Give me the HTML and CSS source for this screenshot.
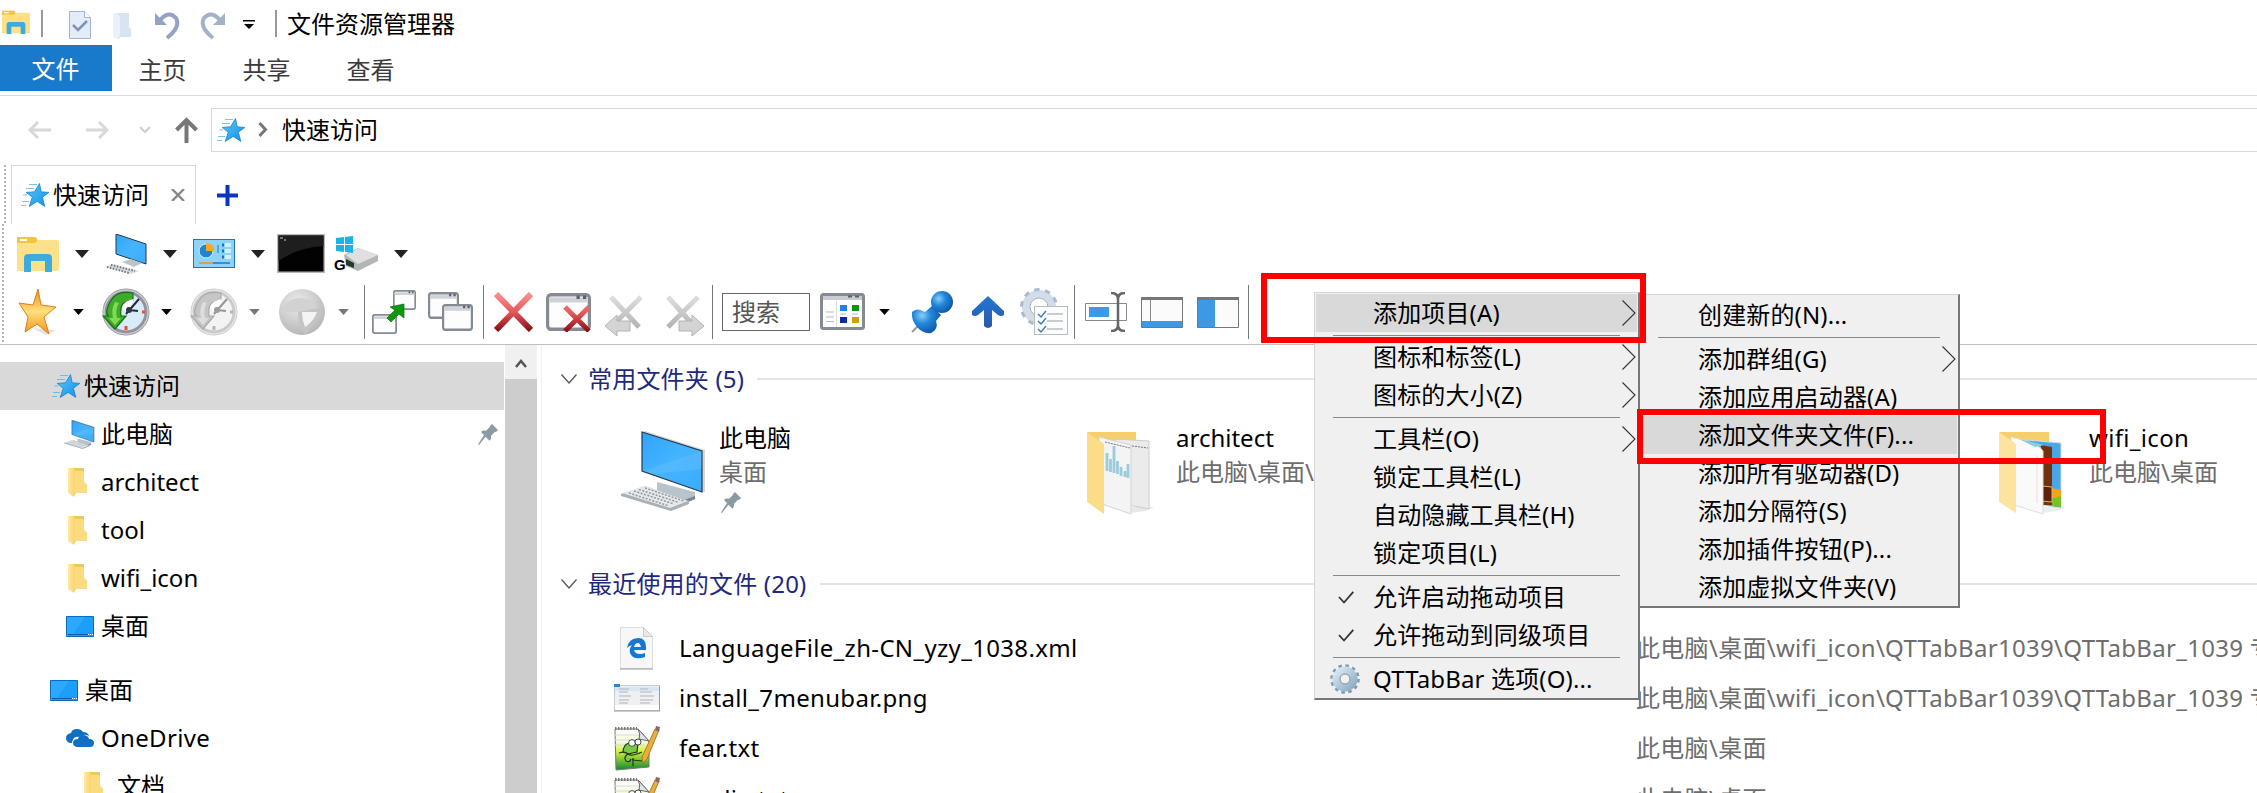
FILE: index.html
```html
<!DOCTYPE html>
<html lang="zh-CN">
<head>
<meta charset="utf-8">
<title>文件资源管理器</title>
<link rel="stylesheet" href="styles.css">
</head>
<body>
<svg class="defs" width="0" height="0" aria-hidden="true">
  <defs>
    <linearGradient id="gBlue" x1="0" y1="0" x2="1" y2="1"><stop offset="0" stop-color="#2fa4fb"/><stop offset=".5" stop-color="#45b4ff"/><stop offset="1" stop-color="#3aaaff"/></linearGradient>
    <linearGradient id="gStar" x1="0" y1="0" x2="1" y2="1"><stop offset="0" stop-color="#5cc8fa"/><stop offset="1" stop-color="#0f90e6"/></linearGradient>
    <linearGradient id="gGold" x1="0" y1="0" x2="0" y2="1"><stop offset="0" stop-color="#e98b1c"/><stop offset=".5" stop-color="#ffe07a"/><stop offset="1" stop-color="#f0931d"/></linearGradient>
    <linearGradient id="gRed" gradientUnits="userSpaceOnUse" x1="0" y1="2" x2="0" y2="38"><stop offset="0" stop-color="#f98f8c"/><stop offset=".5" stop-color="#e45a5a"/><stop offset="1" stop-color="#8d1018"/></linearGradient>
    <linearGradient id="gFold" x1="0" y1="0" x2="1" y2="0"><stop offset="0" stop-color="#ffe9a4"/><stop offset="1" stop-color="#f7d068"/></linearGradient>
    <linearGradient id="gArrow" x1="0" y1="0" x2="0" y2="1"><stop offset="0" stop-color="#1d7ad6"/><stop offset="1" stop-color="#2d57a8"/></linearGradient>
    <linearGradient id="gGray" x1="0" y1="0" x2="0" y2="1"><stop offset="0" stop-color="#dedede"/><stop offset="1" stop-color="#b4b4b4"/></linearGradient>
    <linearGradient id="gGrass" x1="0" y1="0" x2="0" y2="1"><stop offset="0" stop-color="#fff"/><stop offset=".3" stop-color="#f5fbd8"/><stop offset=".55" stop-color="#d8ee3a"/><stop offset="1" stop-color="#0c8a2c"/></linearGradient>
    <radialGradient id="gPin" cx=".35" cy=".35" r=".75"><stop offset="0" stop-color="#8ccdf8"/><stop offset=".4" stop-color="#2389dc"/><stop offset="1" stop-color="#0d4f9e"/></radialGradient>
    <radialGradient id="gBall" cx=".4" cy=".3" r=".75"><stop offset="0" stop-color="#ececec"/><stop offset="1" stop-color="#b4b4b4"/></radialGradient>
    <linearGradient id="gGear" x1="0" y1="0" x2="1" y2="1"><stop offset="0" stop-color="#d9e8f4"/><stop offset="1" stop-color="#8fabc2"/></linearGradient>
  </defs>
  <symbol id="star" viewBox="0 0 28 24">
    <path d="M18.500 .5l1.700 8.300 7.600.6-6.400 4.800 2.400 9.200-7.600-5-8 5.100 3.100-9.300-6.100-4.800 8.300-.6z" fill="url(#gStar)" stroke="#1583cf" stroke-width=".8"/>
    <path d="M8 1.500h8M5 5.500h8M2 12h4M1 18.500h7M0 22.500h5" stroke="#5ab4e6" stroke-width=".8"/>
  </symbol>
  <symbol id="pc" viewBox="0 0 84 80">
    <path d="M36 51l38 10v7l-11 4-27-9z" fill="#b9c3cb"/><path d="M36 61l27 8 11-4v3l-11 5-27-9z" fill="#7a858e"/>
    <path d="M21 1l3-1 60 19v42l-3 0z" fill="#d2d6d9"/>
    <path d="M21 1l60 19v41L21 40z" fill="url(#gBlue)" stroke="#263a4c" stroke-width="1.200"/>
    <path d="M81 20v18L32 43 21 40z" fill="#fff" opacity=".08"/>
    <path d="M0 63l24-8 44 15v3L50 80 0 65z" fill="#a9b0b5"/><path d="M1 62l23-7 43 15-18 7z" fill="#e6e9eb"/>
    <path d="M8 62l40 13M13 60l40 13M18 58.500l40 13M24 57l39 13" stroke="#8f979d" stroke-width="1.500" stroke-dasharray="2 1.500"/>
  </symbol>
  <symbol id="explorer" viewBox="0 0 42 36">
    <path d="M0 3q0-2 2-2h15q3 0 4 3h19q2 0 2 2v27q0 2-2 2H0z" fill="#fde08a"/><path d="M0 1h17q3 0 3 3t-3 3H0z" fill="#f3c53b"/><rect x="3" y="3" width="7" height="2" fill="#fff"/>
    <path d="M7 36V22q0-4 4-4h20q4 0 4 4v14h-7V25H14v11z" fill="#3cabdf"/>
  </symbol>
  <symbol id="folder" viewBox="0 0 19 29">
    <path d="M5 0h11v14l3 3v8H5z" fill="#f0c95e"/><path d="M1 0h4l3 4v21l-2 4-6-4V1z" fill="url(#gFold)"/><path d="M7 3h9v11l3 4v7H7z" fill="#fadb7e"/>
  </symbol>
  <symbol id="screen" viewBox="0 0 28 21"><path d="M.5.5h27v20H.5z" fill="#1c9ffb" stroke="#0b6cb8"/><path d="M1 1h18L7 18H1z" fill="#2ba8ff"/><path d="M2 18.500h20" stroke="#0b5ea5"/><path d="M22 18.500h5" stroke="#fff" stroke-dasharray="1 1"/></symbol>
  <symbol id="pin" viewBox="0 0 20 21"><path d="M14 0l6 6-2 2-1-.3-4 4q.6 3-1.500 5l-4-4L1 21l-1-.6L6 11 3 8q2-2 5-1.300l4-4L12 2z" fill="#8b9aa3"/></symbol>
  <symbol id="tri" viewBox="0 0 14 8"><path d="M0 0h14L7 8z" fill="currentColor"/></symbol>
  <symbol id="win" viewBox="0 0 28 22" preserveAspectRatio="none"><rect x="1" y="1" width="26" height="20" rx="2" fill="#fdfdfd" stroke="#858b94" stroke-width="2"/><path d="M2 4h24" stroke="#cfd3d8" stroke-width="3"/><path d="M19 2.500h2m2 0h2" stroke="#59616b" stroke-width="2"/></symbol>
  <symbol id="chev" viewBox="0 0 14 26"><path d="M.5.5L13 13 .5 25.500" fill="none" stroke="#333" stroke-width="1.100"/></symbol>
  <symbol id="check" viewBox="0 0 16 13"><path d="M1 6l5 5.500L15.300.8" fill="none" stroke="#333" stroke-width="1.800"/></symbol>
  <symbol id="down" viewBox="0 0 16 10"><path d="M.5.5L8 9 15.500.5" fill="none" stroke="#555" stroke-width="1.300"/></symbol>
  <symbol id="clock" viewBox="0 0 48 48">
    <circle cx="24" cy="24" r="21" fill="#d8ebf8" stroke="#93939f" stroke-width="5"/><circle cx="24" cy="24" r="22" fill="none" stroke="#c9cad0" stroke-width="1.500"/>
    <path d="M31 5Q14 2 8 14T7 28H1l12 13L24 28h-5q-1-9 2-12t10-4z" fill="#3faa2c" stroke="#18700e" stroke-width="1.200"/><path d="M13 14q-4 7-2 16H7l6 7 6-7h-4q-2-9 2-15z" fill="#82da50"/>
    <path d="M20 19q3-7 12-8l-4 9-4 4z" fill="#fff"/>
    <path d="M24 26L37 11M27 22l9 1" stroke="#222c38" stroke-width="2"/><circle cx="27" cy="22" r="3" fill="#2e3947"/><path d="M24 38v4M40 24h3" stroke="#e6502b" stroke-width="3"/>
  </symbol>
  <symbol id="note" viewBox="0 0 46 46">
    <path d="M1 4h23l11 12v26l-33 3z" fill="url(#gGrass)" stroke="#777" stroke-width="1"/><path d="M1 10h25M1 15h27M1 20h30" stroke="#cfdcea" stroke-width="1"/>
    <path d="M1 3.500h22" stroke="#777" stroke-width="3" stroke-dasharray="1.500 1.500"/><path d="M24 4q3 5 1 10l10 2z" fill="#dfe7ee" stroke="#666"/>
    <path d="M9 28q0-10 8-10h7l-1 9-9 2q-5 3-2 7 4 2 5-2" fill="#78c943" stroke="#18301a" stroke-width="1.200"/><circle cx="18" cy="18" r="3.400" fill="#fff" stroke="#222" stroke-width=".8"/><circle cx="24" cy="17" r="3" fill="#fff" stroke="#222" stroke-width=".8"/><path d="M5 28q6-2 9 1t14-2M19 33v8M18 35l10 1" fill="none" stroke="#23351b" stroke-width="1.200"/>
    <path d="M41 4l4 1-12 29-4 4-1-6z" fill="#e9ae3c" stroke="#9a6b1b" stroke-width=".8"/><path d="M42 1l4 1-1 5-4-2z" fill="#8c6668"/>
  </symbol>
</svg>

<header class="titlebar">
  <svg class="t-exp" width="28" height="24"><use href="#explorer"/></svg>
  <i class="vbar"></i>
  <svg class="t-doc" width="22" height="28" viewBox="0 0 22 28"><path d="M.5.5h15l6 6v21H.5z" fill="#e3ecf8" stroke="#a4b4cc"/><path d="M15.500.5v6h6" fill="#fff" stroke="#a4b4cc"/><path d="M4 14l5 5 9-9" fill="none" stroke="#7f93b5" stroke-width="2.500"/></svg>
  <svg class="t-fold" width="18" height="26" viewBox="0 0 18 26"><path d="M0 0h16v14l2 2v8H8l-2 2-6-2z" fill="#d9e4f2"/><path d="M0 0h4l3 4v19l-2 3-5-2z" fill="#eaf1f9"/></svg>
  <svg class="t-undo" width="25" height="28" viewBox="0 0 25 28"><path d="M5 8Q14-2 21 6q5 9-9 20" fill="none" stroke="#94a3c1" stroke-width="4"/><path d="M0 1v12h12z" fill="#94a3c1"/></svg>
  <svg class="t-redo" width="25" height="28" viewBox="0 0 25 28"><path d="M20 8Q11-2 4 6q-5 9 9 20" fill="none" stroke="#a5b1c8" stroke-width="4"/><path d="M25 1v12H13z" fill="#a5b1c8"/></svg>
  <svg class="t-more" width="12" height="9" viewBox="0 0 12 9"><path d="M0 0h12v1.500H0zM1 4h10L6 9z"/></svg>
  <i class="vbar"></i>
  <span class="title">文件资源管理器</span>
</header>

<nav class="ribbon">
  <span class="tab-file">文件</span><span>主页</span><span>共享</span><span>查看</span>
</nav>

<div class="addressbar">
  <svg class="a-back" width="23" height="18" viewBox="0 0 23 18"><path d="M10 1L2 9l8 8M2 9h21" fill="none" stroke="#d8d8d8" stroke-width="3"/></svg>
  <svg class="a-fwd" width="23" height="18" viewBox="0 0 23 18"><path d="M13 1l8 8-8 8M21 9H0" fill="none" stroke="#d8d8d8" stroke-width="3"/></svg>
  <svg class="a-drop" width="12" height="8" viewBox="0 0 12 8"><path d="M1 1l5 5 5-5" fill="none" stroke="#d0d0d0" stroke-width="2.200"/></svg>
  <svg class="a-up" width="23" height="26" viewBox="0 0 23 26"><path d="M1.500 13l10-10 10 10M11.500 3v23" fill="none" stroke="#777" stroke-width="4"/></svg>
  <div class="address">
    <svg width="28" height="24"><use href="#star"/></svg>
    <svg class="crumb" width="10" height="15" viewBox="0 0 10 15"><path d="M1.500 1l6 6.500-6 6.500" fill="none" stroke="#777" stroke-width="3"/></svg>
    <span>快速访问</span>
  </div>
</div>

<div class="tabs">
  <i class="grip"></i>
  <div class="tab">
    <svg width="28" height="24"><use href="#star"/></svg><span>快速访问</span>
    <svg class="close" width="14" height="12" viewBox="0 0 14 12"><path d="M1 0l12 12M13 0L1 12" stroke="#888" stroke-width="2.400"/></svg>
  </div>
  <svg class="plus" width="21" height="21" viewBox="0 0 21 21"><path d="M10.500 0v21M0 10.500h21" stroke="#0a34c6" stroke-width="4"/></svg>
</div>

<div class="toolbar">
  <i class="grip"></i>
  <div class="toolrows">
    <div class="toolrow launch">
      <svg width="42" height="36"><use href="#explorer"/></svg>
      <svg class="dd" width="14" height="8"><use href="#tri"/></svg>
      <svg width="42" height="40" viewBox="0 0 42 40"><path d="M11 0l30 10v20L11 20z" fill="url(#gBlue)" stroke="#26394b"/><path d="M17 28l9-3 11 4-8 4z" fill="#bac3c8"/><path d="M0 33l8-3 26 7-8 3z" fill="#d8dcdf"/><path d="M2 33l22 6M6 31l24 6" stroke="#73797d" stroke-width="2" stroke-dasharray="1.500 1.500"/></svg>
      <svg class="dd" width="14" height="8"><use href="#tri"/></svg>
      <svg width="42" height="29" viewBox="0 0 42 29"><rect x=".5" y=".5" width="41" height="28" fill="#8fd2f9" stroke="#1a76b8"/><circle cx="13" cy="12" r="7" fill="#2186d2" stroke="#d7effc"/><path d="M13 12V4q8 0 8 8z" fill="#f6a723"/><path d="M25 6v8" stroke="#267bb4"/><path d="M29 6h2M29 12h2M29 18h2" stroke="#1374bd" stroke-width="3"/><path d="M32 6h6M32 12h6M32 18h6" stroke="#d3effc" stroke-width="4"/><path d="M6 24h14" stroke="#f08c1a" stroke-width="1.500"/><path d="M20 24h17" stroke="#2079b8" stroke-width="1.500"/></svg>
      <svg class="dd" width="14" height="8"><use href="#tri"/></svg>
      <svg class="term" width="48" height="39" viewBox="0 0 48 39"><rect width="48" height="39" fill="#b9b9b9"/><rect x="1.500" y="1.500" width="45" height="36" fill="#020202"/><path d="M1.500 1.500h45V12Q22 13 1.500 27z" fill="#1e1e1e"/><path d="M3 4h3M7 6h2" stroke="#ccc"/></svg>
      <svg width="44" height="36" viewBox="0 0 44 36"><path d="M10 19l14-7 20 7v6L24 35 12 30z" fill="#b4b5b6"/><path d="M12 19l13-7 19 7-20 9z" fill="#e0e0e0"/><path d="M12 23l8 4v5l-8-3z" fill="#243a26"/><path d="M2 2l8-1v7H2zM11 1l8-1v8h-8zM2 9h8v7l-8-1zM11 9h8v8l-8-1z" fill="#19b3ea"/><text class="drive-letter" x="0" y="34">G</text></svg>
      <svg class="dd" width="14" height="8"><use href="#tri"/></svg>
    </div>
    <div class="toolrow tools">
      <svg class="i-gold" width="39" height="48" viewBox="0 0 39 48"><path d="M14 40l24 2-10 5z" fill="#e3e3e3"/><path d="M20 1l3 16 15 2-12 10 5 17-12-10-12 8 3-15L1 15l14 2z" fill="url(#gGold)" stroke="#dc8118"/></svg>
      <svg class="ds" width="11" height="6"><use href="#tri"/></svg>
      <svg class="i-clock" width="48" height="48"><use href="#clock"/></svg>
      <svg class="ds" width="11" height="6"><use href="#tri"/></svg>
      <svg class="i-clock dim" width="48" height="48"><use href="#clock"/></svg>
      <svg class="ds gray" width="11" height="6"><use href="#tri"/></svg>
      <svg class="i-ball" width="48" height="48" viewBox="0 0 48 48"><circle cx="24" cy="24" r="23" fill="url(#gBall)"/><path d="M3 24h38Q36 10 22 10T3 24z" fill="#d2d2d2"/><path d="M20 24l26-5-18 28q-8-8-8-23z" fill="#c4c4c4"/><path d="M24 24h15q-3 9-12 15-3-7-3-15z" fill="#f4f4f4"/></svg>
      <svg class="ds gray" width="11" height="6"><use href="#tri"/></svg>
      <i class="sep s1"></i>
      <svg class="i-move" width="46" height="46" viewBox="0 0 46 46"><use href="#win" x="21" y="1" width="23" height="20"/><use href="#win" x="0" y="25" width="25" height="20"/><path d="M15 29l8-8-5-3 14-3v14l-5-4-8 8z" fill="#0c9a0c" stroke="#0a6a0a" stroke-width=".7"/></svg>
      <svg class="i-two" width="46" height="40" viewBox="0 0 46 40"><use href="#win" x="0" y="0" width="31" height="27"/><use href="#win" x="14" y="12" width="31" height="27"/></svg>
      <i class="sep s2"></i>
      <svg class="i-x" width="39" height="40" viewBox="0 0 39 40"><path d="M2 2l35 36M37 2L2 38" stroke="url(#gRed)" stroke-width="6"/></svg>
      <svg class="i-winx" width="45" height="39" viewBox="0 0 45 39"><use href="#win" x="0" y="0" width="45" height="38"/><path d="M19 14l24 24M43 14L19 38" stroke="url(#gRed)" stroke-width="5"/></svg>
      <svg class="i-xl" width="40" height="43" viewBox="0 0 40 43"><path d="M7 3l28 30M37 3L10 30" stroke="url(#gGray)" stroke-width="5"/><path d="M1 32l12-11v6h13v10H13v5z" fill="#d4d4d4" stroke="#b3b3b3"/></svg>
      <svg class="i-xr" width="40" height="43" viewBox="0 0 40 43"><path d="M3 3l27 30M33 3L3 33" stroke="url(#gGray)" stroke-width="5"/><path d="M39 32L27 21v6H14v10h13v5z" fill="#d4d4d4" stroke="#b3b3b3"/></svg>
      <i class="sep s3"></i>
      <div class="search">搜索</div>
      <svg class="i-list" width="45" height="38" viewBox="0 0 45 38"><rect x="1.500" y="1.500" width="42" height="34" rx="2" fill="#fdfdfd" stroke="#858b94" stroke-width="3"/><path d="M3 5h39" stroke="#c8ccd2" stroke-width="4"/><path d="M28 3.500h4m3 0h4" stroke="#59616b" stroke-width="2"/><path d="M16.500 8v26" stroke="#ddd"/><path d="M6 19h8M6 24h8M6 28.500h8M20 21h6M32 21h6" stroke="#bbb" stroke-width="1.200"/><path d="M20 12h7v6h-7z" fill="#1e83e8"/><path d="M32 12h7v6h-7z" fill="#0d9410"/><path d="M20 24h7v6h-7z" fill="#0b2ba0"/><path d="M32 24h7v6h-7z" fill="#d1a00e"/></svg>
      <svg class="ds" width="11" height="6"><use href="#tri"/></svg>
      <svg class="i-pin" width="43" height="43" viewBox="0 0 43 43"><path d="M1 41l10-10" stroke="#999" stroke-width="2"/><path d="M1 21q5-5 13 0l7-6 9 9-5 6q3 8-5 12-8 1-14-6T1 21z" fill="url(#gPin)"/><circle cx="31" cy="11" r="11" fill="url(#gPin)"/></svg>
      <svg class="i-up" width="32" height="32" viewBox="0 0 32 32"><path d="M16 0l16 15v4q-3 2-6 0l-6-5v16q-4 4-8 0V14l-6 5q-3 2-6 0v-4z" fill="url(#gArrow)"/></svg>
      <svg class="i-opts" width="48" height="48" viewBox="0 0 48 48"><circle cx="19" cy="19" r="13" fill="none" stroke="#d2dde8" stroke-width="8"/><circle cx="19" cy="19" r="17.500" fill="none" stroke="#a9bccd" stroke-width="3" stroke-dasharray="5.500 5.500"/><circle cx="19" cy="19" r="9" fill="#fff" stroke="#9fb3c7"/><rect x="14.500" y="18.500" width="33" height="28" fill="#fcfdfe" stroke="#bbb"/><path d="M27 26h16M27 33h16M27 41h16" stroke="#9a9aa5"/><path d="M18 26l3 3 5-6M18 33l3 3 5-6M18 41l3 3 5-6" fill="none" stroke="#3c83b8" stroke-width="1.500"/></svg>
      <i class="sep s4"></i>
      <svg class="i-ren" width="42" height="40" viewBox="0 0 42 40"><path d="M.5 11.500h41v17H.5z" fill="#fff" stroke="#888"/><path d="M4 15h20v10H4z" fill="#3d98e5"/><path d="M26 1q7 0 7 6v26q0 6-7 6M40 1q-7 0-7 6v26q0 6 7 6" fill="none" stroke="#666" stroke-width="2.500"/></svg>
      <svg class="i-pan" width="42" height="31" viewBox="0 0 42 31"><path d="M.5.5h41v30H.5z" fill="#fbfbfb" stroke="#777"/><path d="M0 1.500h42" stroke="#777" stroke-width="3"/><path d="M9.500 3v22" stroke="#888"/><path d="M1 24h40v6H1z" fill="#3d98e5"/></svg>
      <svg class="i-pan2" width="42" height="31" viewBox="0 0 42 31"><path d="M.5.5h41v30H.5z" fill="#fbfbfb" stroke="#777"/><path d="M0 1.500h42" stroke="#777" stroke-width="3"/><path d="M1 3h17v27H1z" fill="#3d98e5"/></svg>
      <i class="sep s5"></i>
    </div>
  </div>
</div>

<div class="body">
  <aside class="tree">
    <div class="node l0 on"><svg width="28" height="24"><use href="#star"/></svg><span>快速访问</span></div>
    <div class="node l1"><svg width="31" height="29"><use href="#pc"/></svg><span>此电脑</span><svg class="tpin" width="20" height="21"><use href="#pin"/></svg></div>
    <div class="node l1 f"><svg width="19" height="29"><use href="#folder"/></svg><span>architect</span></div>
    <div class="node l1 f"><svg width="19" height="29"><use href="#folder"/></svg><span>tool</span></div>
    <div class="node l1 f"><svg width="19" height="29"><use href="#folder"/></svg><span>wifi_icon</span></div>
    <div class="node l1"><svg width="28" height="21"><use href="#screen"/></svg><span>桌面</span></div>
    <div class="node l0 gap"><svg width="28" height="21"><use href="#screen"/></svg><span>桌面</span></div>
    <div class="node l1"><svg width="28" height="18" viewBox="0 0 28 18"><path d="M6 14H4q-4-1-4-5t5-5q1-4 6-4 4 0 6 3 5 0 6 4-5-3-9 1-6-1-7 3-1 1-1 3z" fill="#0f6fc5"/><path d="M11 18q-4-1-4-4 0-4 5-4 1-4 5-4 5 0 6 4 5 0 5 4t-4 4z" fill="#0f6fc5"/></svg><span class="wide">OneDrive</span></div>
    <div class="node l2 f"><svg width="19" height="29"><use href="#folder"/></svg><span>文档</span></div>
  </aside>
  <div class="scroll"><div class="scroll-up"><svg width="12" height="10" viewBox="0 0 12 10"><path d="M1 8l5-6 5 6" fill="none" stroke="#555" stroke-width="2.500"/></svg></div></div>
  <main class="content">
    <h2 class="group"><svg width="16" height="10"><use href="#down"/></svg><span>常用文件夹 (5)</span><i></i></h2>
    <div class="folders">
      <div class="card">
        <svg width="84" height="80"><use href="#pc"/></svg>
        <div><p>此电脑</p><p class="sub">桌面</p><svg class="cpin" width="20" height="21"><use href="#pin"/></svg></div>
      </div>
      <div class="card">
        <svg width="68" height="84" viewBox="0 0 68 84"><path d="M40 76h27l-8 4-17 2z" fill="#e8e8e8"/><path d="M0 1h49v70H0z" fill="#f5cf6c"/><path d="M28 8l34 2v68l-20-4z" fill="#ebebeb" stroke="#ccc"/><path d="M12 6l32 8v69L12 72z" fill="#f4f4f4" stroke="#d5d5d5"/><path d="M18 11l25 6M45 15l16 2" stroke="#777" stroke-dasharray="2 1"/><path d="M20 40V22M23.500 41V28M27 42V15M30.500 43V30M34 45V36M38 46V40M41 47V33" fill="none" stroke="#9bcbdd" stroke-width="2.800"/><path d="M0 1l17 12v70L0 71z" fill="#fbdc87"/></svg>
        <div><p>architect</p><p class="sub">此电脑\桌面\</p></div>
      </div>
      <div class="card">
        <svg width="66" height="84" viewBox="0 0 66 84"><path d="M40 76h27l-8 4-17 2z" fill="#eee"/><path d="M0 1h50v70H0z" fill="#f5cf6c"/><path d="M28 9l34 3v65l-20-3z" fill="#47a7e8" stroke="#ddd"/><path d="M42 14l11 2v58H42z" fill="#73320e"/><path d="M53 57l9 2v8l-9 0z" fill="#f0a41c"/><path d="M53 68l9-3v11l-9-1z" fill="#76c421"/><path d="M43 55l10 1v15l-10-1z" fill="#5b2208" stroke="#e2b26a"/><path d="M12 6q28 6 32 14v63L12 73z" fill="#fafafb" stroke="#ddd"/><path d="M20 8l25 6-9 2z" fill="#8ccbd8"/><path d="M38 24v48" stroke="#eee0d2"/><path d="M0 1l17 12v69L0 71z" fill="#fde3a0"/></svg>
        <div><p class="wide">wifi_icon</p><p class="sub">此电脑\桌面</p></div>
      </div>
    </div>
    <h2 class="group"><svg width="16" height="10"><use href="#down"/></svg><span>最近使用的文件 (20)</span><i></i></h2>
    <div class="files">
      <div class="file"><svg width="46" height="46" viewBox="0 0 46 46"><path d="M6.500 2.500h23l9 9v32h-32z" fill="#f7f7f8" stroke="#ddd"/><path d="M29.500 2.500v9h9z" fill="#e8e8e8" stroke="#ccc"/><path d="M6 44h33" stroke="#999"/><path d="M13 23q2-10 11-10 8 0 8 9v3H20q1 4 6 4 3 0 5-1v4q-12 4-15-4-1-5 2-8-3 1-5 3zm7-1h7q-1-4-3-4-3 0-4 4z" fill="#1478d4"/></svg><span class="name">LanguageFile_zh-CN_yzy_1038.xml</span><span class="path">此电脑\桌面\wifi_icon\QTTabBar1039\QTTabBar_1039 专</span></div>
      <div class="file"><svg width="46" height="46" viewBox="0 0 46 46"><path d="M.5 10.500h45v25H.5z" fill="#eef0f2" stroke="#ccc"/><path d="M1 30h44v5H1z" fill="#fff"/><path d="M1 12h44v4H1z" fill="#d7e6f3"/><path d="M0 9h6v3H0z" fill="#2a86d8"/><path d="M0 36h46M45.500 11v25" stroke="#999"/><path d="M5 14h10M5 17h9M5 21h12M5 25h10M5 28h9M26 14h8M26 17h12M26 21h14M26 25h13M26 28h10" stroke="#b0b4b9"/></svg><span class="name">install_7menubar.png</span><span class="path">此电脑\桌面\wifi_icon\QTTabBar1039\QTTabBar_1039 专</span></div>
      <div class="file"><svg width="46" height="46"><use href="#note"/></svg><span class="name">fear.txt</span><span class="path">此电脑\桌面</span></div>
      <div class="file"><svg width="46" height="46"><use href="#note"/></svg><span class="name">media.txt</span><span class="path">此电脑\桌面</span></div>
    </div>
  </main>
</div>

<div class="menu menu-sub">
  <div class="item">创建新的(N)...</div>
  <hr>
  <div class="item">添加群组(G)<svg width="14" height="26"><use href="#chev"/></svg></div>
  <div class="item">添加应用启动器(A)</div>
  <div class="item on">添加文件夹文件(F)...</div>
  <div class="item">添加所有驱动器(D)</div>
  <div class="item">添加分隔符(S)</div>
  <div class="item">添加插件按钮(P)...</div>
  <div class="item">添加虚拟文件夹(V)</div>
</div>
<div class="menu menu-main">
  <div class="item on">添加项目(A)<svg width="14" height="26"><use href="#chev"/></svg></div>
  <hr>
  <div class="item">图标和标签(L)<svg width="14" height="26"><use href="#chev"/></svg></div>
  <div class="item">图标的大小(Z)<svg width="14" height="26"><use href="#chev"/></svg></div>
  <hr>
  <div class="item">工具栏(O)<svg width="14" height="26"><use href="#chev"/></svg></div>
  <div class="item">锁定工具栏(L)</div>
  <div class="item">自动隐藏工具栏(H)</div>
  <div class="item">锁定项目(L)</div>
  <hr>
  <div class="item"><svg class="mark" width="16" height="13"><use href="#check"/></svg>允许启动拖动项目</div>
  <div class="item"><svg class="mark" width="16" height="13"><use href="#check"/></svg>允许拖动到同级项目</div>
  <hr>
  <div class="item"><svg class="gear" width="30" height="30" viewBox="0 0 30 30"><circle cx="15" cy="15" r="13.300" fill="none" stroke="#7f9bb5" stroke-width="3" stroke-dasharray="3.500 3.460"/><circle cx="15" cy="15" r="8.800" fill="none" stroke="url(#gGear)" stroke-width="7.500"/><circle cx="15" cy="15" r="5" fill="none" stroke="#7d93a8"/></svg>QTTabBar 选项(O)...</div>
</div>
<div class="mark-box box-a"></div>
<div class="mark-box box-b"></div>
</body>
</html>
```
FILE: styles.css
```css
* { box-sizing: border-box; }
body {
  margin: 0; width: 2257px; height: 793px; overflow: hidden; position: relative;
  background: #fff; color: #000;
  font: 24px/32px "Noto Sans", "Noto Sans CJK SC", sans-serif;
}
svg { display: block; flex: none; }
span { white-space: nowrap; }
.defs { position: absolute; }

.titlebar { display: flex; height: 45px; padding-left: 2px; align-items: flex-start; }
.titlebar svg, .vbar { margin-top: 10px; }
.vbar { width: 2px; height: 27px; background: #999; }
.t-exp + .vbar { margin-left: 11px; }
.titlebar .t-doc { margin: 11px 0 0 26px; }
.titlebar .t-fold { margin: 13px 0 0 22px; }
.titlebar .t-undo { margin: 12px 0 0 24px; }
.titlebar .t-redo { margin: 12px 0 0 20px; }
.titlebar .t-more { margin: 20px 0 0 18px; }
.t-more + .vbar { margin-left: 20px; }
.title { margin: 8px 0 0 10px; }

.ribbon { display: flex; height: 51px; border-bottom: 1px solid #dadbdc; color: #3b3b3b; }
.ribbon span { width: 104px; height: 46px; padding-right: 1px; line-height: 50px; text-align: center; }
.ribbon .tab-file { width: 112px; line-height: 47px; background: #1979ca; color: #fff; }
.ribbon .tab-file + span { margin-left: -1px; }

.addressbar { display: flex; align-items: center; height: 67px; padding: 0 0 0 28px; }
.a-fwd { margin-left: 35px; }
.a-drop { margin-left: 30px; }
.a-up { margin-left: 24px; }
.address { display: flex; align-items: center; flex: 1; height: 44px; margin-left: 13px; padding-left: 5px; border: 1px solid #d9d9d9; border-right: 0; }
.crumb { margin: 0 14px 0 13px; }

.tabs { display: flex; height: 61px; padding: 2px 0 0 4px; }
.grip { flex: none; width: 2px; background: repeating-linear-gradient(#b5b5b5 0 2px, #fff 2px 4px); }
.tab { display: flex; align-items: center; width: 185px; height: 59px; margin-left: 5px; padding-left: 9px; border: 1px solid #d9d9d9; border-bottom: 0; }
.tab span { margin-left: 4px; }
.close { margin-left: 22px; }
.plus { margin: 20px 0 0 21px; }

.toolbar { display: flex; height: 121px; padding-left: 2px; border-bottom: 1px solid #bfbfbf; }
.toolrow { display: flex; align-items: center; }
.launch { height: 58px; padding: 1px 0 0 13px; color: #222; }
.launch .dd { margin: 0 16px 0 16px; }
.launch .term { margin: 0 9px 0 -4px; }
.drive-letter { font: bold 15px "Liberation Sans", sans-serif; fill: #000; stroke: #fff; stroke-width: 1px; paint-order: stroke; }
.tools { height: 60px; padding-left: 14px; }
.tools .ds { margin-left: 17px; }
.gray { color: #777; }
.tools .i-gold + .ds { margin-left: 16px; }
.tools .i-clock + .ds { margin-left: 11px; }
.ds + .i-clock { margin-left: 18px; }
.ds + .i-clock.dim { margin-left: 18px; filter: grayscale(1) opacity(.5); }
.i-ball { margin-left: 18px; }
.tools .i-ball + .ds { margin-left: 12px; }
.sep { flex: none; width: 1px; height: 54px; background: #777; }
.s1 { margin-left: 15px; }
.i-move { margin-left: 7px; }
.i-two { margin-left: 10px; }
.s2 { margin-left: 9px; }
.i-x { margin-left: 10px; }
.i-winx { margin-left: 13px; }
.i-xl { margin: 6px 0 0 13px; }
.i-xr { margin: 6px 0 0 21px; }
.s3 { margin-left: 7px; }
.search { width: 88px; height: 38px; margin-left: 9px; padding-left: 9px; border: 1px solid #666; color: #555; line-height: 35px; }
.i-list { margin-left: 10px; }
.tools .i-list + .ds { margin-left: 14px; }
.i-pin { margin-left: 21px; }
.i-up { margin-left: 18px; }
.i-opts { margin-left: 16px; }
.s4 { margin-left: 6px; }
.i-ren { margin-left: 10px; }
.i-pan, .i-pan2 { margin-left: 14px; }
.s5 { margin-left: 9px; }

.body { display: flex; height: 448px; }
.tree { width: 505px; padding: 17px 1px 0 0; }
.node { display: flex; align-items: center; height: 48px; }
.node span { margin-left: 7px; }
.l0 { padding-left: 50px; }
.l0.on { padding-left: 52px; background: #d9d9d9; }
.l0.on span { margin-left: 4px; }
.l1 { padding-left: 66px; }
.l1 svg + span { margin-left: 7px; }
.l1 svg[width="31"] { margin-left: -2px; }
.l1 svg[width="31"] + span { margin-left: 6px; }
.f.l1 { padding-left: 68px; }
.f.l1 svg + span { margin-left: 14px; }
.l2 { padding-left: 84px; }
.l2 svg + span { margin-left: 14px; }
.gap { margin-top: 16px; }
.tpin { margin-left: auto; margin-right: 6px; }
.wide, .name { letter-spacing: .33px; }
.scroll { width: 32px; background: #cdcdcd; }
.scroll-up { height: 34px; padding: 14px 0 0 10px; background: #f0f0f0; }

.content { flex: 1; min-width: 0; margin-left: 4px; border-left: 1px solid #f0f0f0; overflow: hidden; }
.group { display: flex; align-items: center; height: 34px; margin: 17px 0 0; padding-left: 19px; font-size: 24px; font-weight: 400; color: #1e287d; letter-spacing: .2px; }
.group span { margin: 0 13px 0 11px; }
.group i { flex: 1; height: 2px; background: #e4e4e4; }
.folders { display: grid; grid-template-columns: 466px 912px 1fr; height: 171px; padding: 35px 0 0 79px; }
.card { display: flex; }
.card p { margin: 0; line-height: 34px; white-space: nowrap; }
.card > div { margin: -10px 0 0 14px; }
.card + .card > div { margin-left: 21px; }
.card + .card + .card > div { margin-left: 24px; }
.sub, .path { color: #6d6d6d; }
.path { letter-spacing: .3px; }
.cpin { margin: 3px 0 0 2px; }
.folders + .group { margin-top: 0; }
.files { padding: 22px 0 0 72px; }
.file { display: grid; grid-template-columns: 46px 938px 1fr; column-gap: 19px; align-items: center; height: 50.2px; white-space: nowrap; }

.menu { position: absolute; background: #f0f0f0; border: solid; border-width: 1px 2px 2px 1px; border-color: #d5d5d5 #777 #777 #d5d5d5; padding: 1px; letter-spacing: .15px; }
.menu-main { left: 1314px; top: 292px; width: 326px; height: 408px; }
.menu-sub { left: 1639px; top: 294px; width: 321px; height: 314px; }
.item { display: flex; align-items: center; height: 38px; padding-left: 57px; white-space: nowrap; }
.item svg { margin-left: auto; margin-right: 1px; }
.item .mark { margin: 0 19px 0 -35px; }
.item .gear { margin: 0 13px 0 -43px; }
.item.on { background: #d9d9d9; }
.menu hr { height: 1px; margin: 3px 17px 2px; border: 0; background: #888; }
.mark-box { position: absolute; border: 6px solid #f00; }
.box-a { left: 1261px; top: 273px; width: 385px; height: 70px; }
.box-b { left: 1637px; top: 409px; width: 469px; height: 55px; }
```
